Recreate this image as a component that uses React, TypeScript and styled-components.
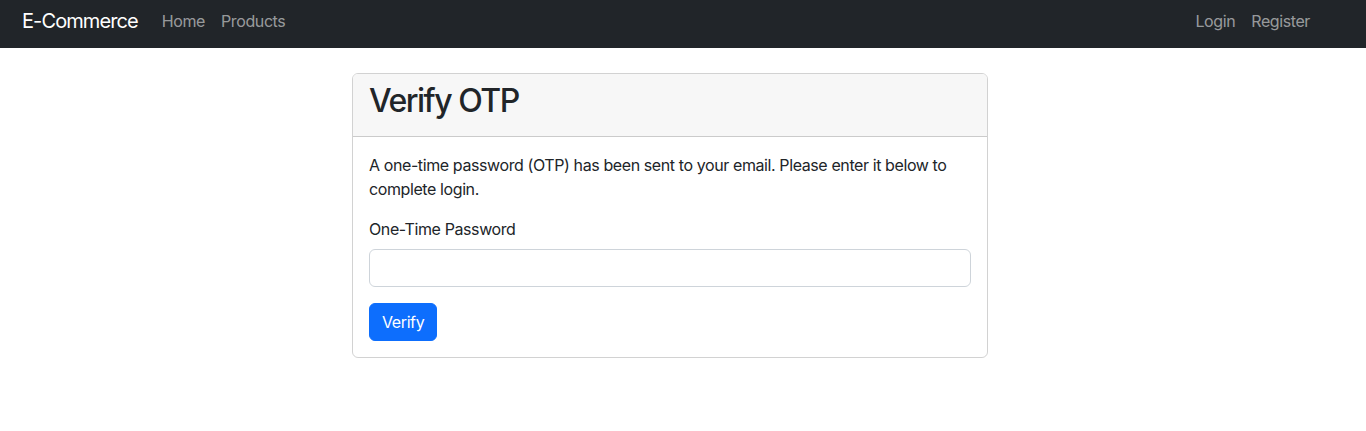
import React from "react";
import styled, { createGlobalStyle } from "styled-components";

const Global = createGlobalStyle`
  * { box-sizing: border-box; }
  body {
    margin: 0;
    font-family: Inter, "Noto Sans", "Liberation Sans", sans-serif;
    font-size: 16px;
    line-height: 1.5;
    letter-spacing: -0.4px;
    color: #212529;
    background: #fff;
  }
`;

const Navbar = styled.nav`
  height: 48px;
  background: #212529;
  display: flex;
  align-items: flex-start;
  padding: 6px 48px 0 22px;
`;

const Brand = styled.a`
  font-size: 20px;
  line-height: 30px;
  letter-spacing: -0.9px;
  color: #fff;
  text-decoration: none;
  margin-right: 16px;
`;

const NavList = styled.div<{ $right?: boolean }>`
  display: flex;
  margin-left: ${(p) => (p.$right ? "auto" : "0")};
`;

const NavLink = styled.a`
  font-size: 16px;
  line-height: 30px;
  padding: 0 8px;
  color: rgba(255, 255, 255, 0.55);
  text-decoration: none;
`;

const Main = styled.main`
  display: flex;
  padding: 25px 0 0 352px;
`;

const Card = styled.section`
  width: 636px;
  border: 1px solid rgba(0, 0, 0, 0.175);
  border-radius: 6px;
  overflow: hidden;
`;

const CardHeader = styled.header`
  padding: 8px 16px;
  background: #f7f7f7;
  border-bottom: 1px solid rgba(0, 0, 0, 0.175);
`;

const Title = styled.h2`
  margin: 0 0 8px;
  font-size: 32px;
  font-weight: 500;
  line-height: 1.2;
  letter-spacing: -1.5px;
`;

const CardBody = styled.div`
  padding: 16px;
`;

const Text = styled.p`
  margin: 0 0 16px;
`;

const Label = styled.label`
  display: block;
  margin-bottom: 8px;
`;

const Input = styled.input`
  display: block;
  width: 100%;
  height: 38px;
  padding: 6px 12px;
  font: inherit;
  border: 1px solid #ced4da;
  border-radius: 6px;
  margin-bottom: 16px;
  outline: none;
`;

const Button = styled.button`
  font: inherit;
  font-size: 16px;
  line-height: 24px;
  letter-spacing: -0.4px;
  padding: 6px 12px;
  color: #fff;
  background: #0d6efd;
  border: 1px solid #0d6efd;
  border-radius: 6px;
`;

export default function App() {
  return (
    <>
      <Global />
      <Navbar>
        <Brand href="#">E-Commerce</Brand>
        <NavList>
          <NavLink href="#">Home</NavLink>
          <NavLink href="#">Products</NavLink>
        </NavList>
        <NavList $right>
          <NavLink href="#">Login</NavLink>
          <NavLink href="#">Register</NavLink>
        </NavList>
      </Navbar>
      <Main>
        <Card>
          <CardHeader>
            <Title>Verify OTP</Title>
          </CardHeader>
          <CardBody>
            <Text>
              A one-time password (OTP) has been sent to your email. Please enter it below to
              complete login.
            </Text>
            <Label htmlFor="otp">One-Time Password</Label>
            <Input id="otp" type="text" />
            <Button type="button">Verify</Button>
          </CardBody>
        </Card>
      </Main>
    </>
  );
}
